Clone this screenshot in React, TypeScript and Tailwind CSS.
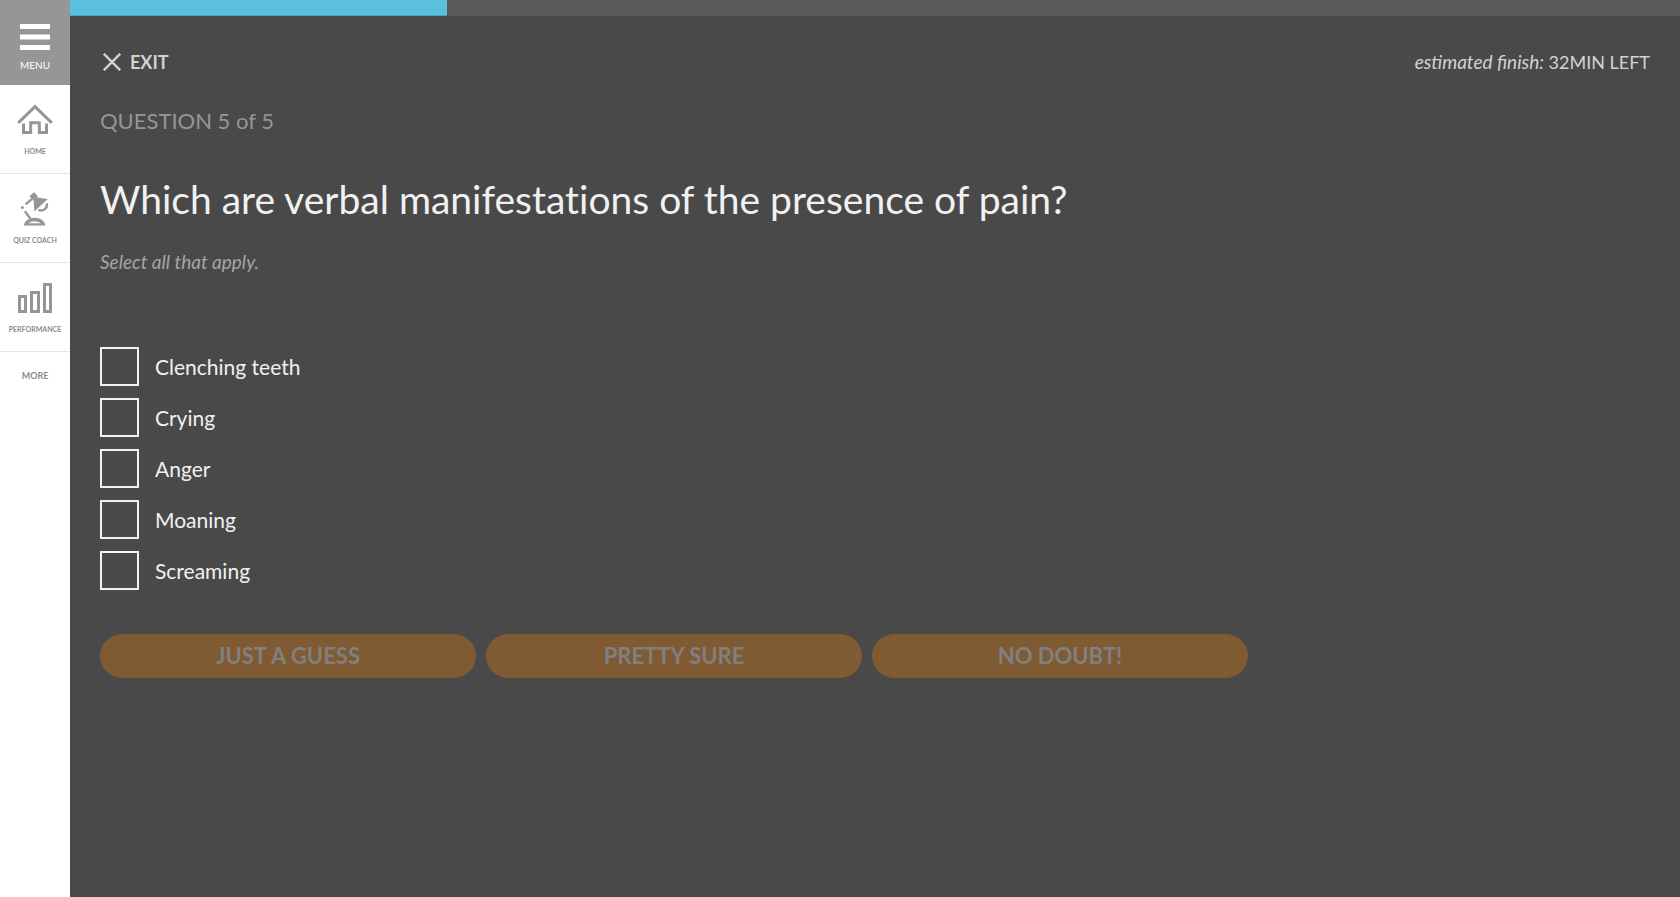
import { useState } from "react";
import type { ReactNode } from "react";

const OPTIONS = ["Clenching teeth", "Crying", "Anger", "Moaning", "Screaming"];
const CONFIDENCE = ["JUST A GUESS", "PRETTY SURE", "NO DOUBT!"];
const PROGRESS = 23.4;

function HomeIcon() {
  return (
    <svg width="36" height="32" viewBox="0 0 36 32" fill="none" stroke="#969696" strokeWidth="3" aria-hidden="true">
      <path d="M1.2 18.8 18 2.6l16.8 16.2" />
      <path d="M6.5 19.5v9h7.2v-9.8h8.6v9.8h7.2v-9" />
    </svg>
  );
}

function LampIcon() {
  return (
    <svg width="30" height="36" viewBox="0 0 30 36" fill="none" stroke="#969696" strokeWidth="2.4" aria-hidden="true">
      <path d="M9.5 5.2 14 1.2l3.4 3.2v2.200l10.400 1.400-13.400 12.600-.8-10.800z" fill="#969696" stroke="none" />
      <path d="M12 7.800 5.600 13.400" />
      <circle cx="2.400" cy="16.600" r="1.500" fill="#969696" stroke="none" />
      <path d="M4.800 20.200 10.400 27.600" />
      <path d="M26.800 12.400c1.200 4.600-3.400 8.600-8.600 6.600" />
      <path d="M3.800 34.500C4.600 29.700 9 26.800 14.600 26.800S24.600 29.700 25.400 34.500z" fill="#969696" stroke="none" />
      <path d="M8.400 32.200c2.400-2.400 10-2.400 12.400 0z" fill="#fff" stroke="none" />
    </svg>
  );
}

function BarsIcon() {
  return (
    <svg width="36" height="32" viewBox="0 0 36 32" fill="none" stroke="#969696" strokeWidth="3" aria-hidden="true">
      <path d="M2.5 14.5h6v15h-6zM14.5 10.5h7v19h-7zM27.5 2.5h6v27h-6z" />
    </svg>
  );
}

function NavItem({ label, children }: { label: string; children: ReactNode }) {
  return (
    <a href="#" className="flex flex-col items-center border-b border-[#e6e6e6] py-[17px]">
      <span className="flex h-9 items-center">{children}</span>
      <span className="mt-2 text-[7px] leading-[10px] font-bold">{label}</span>
    </a>
  );
}

export default function App() {
  const [selected, setSelected] = useState<string[]>([]);
  const toggle = (option: string) =>
    setSelected((prev) => (prev.includes(option) ? prev.filter((o) => o !== option) : [...prev, option]));

  return (
    <div className="flex min-h-screen bg-[#494949] font-[Lato,sans-serif] text-[#f1f1f1]">
      <nav className="flex w-[70px] shrink-0 flex-col bg-white text-[#8c8c8c]">
        <button type="button" className="flex flex-col items-center bg-[#969696] pt-6 pb-3 text-white">
          <svg width="30" height="26" viewBox="0 0 30 26" fill="currentColor" aria-hidden="true">
            <path d="M0 0h30v5H0zM0 10.5h30v5H0zM0 21h30v5H0z" />
          </svg>
          <span className="mt-2 text-[10px] leading-[15px]">MENU</span>
        </button>
        <NavItem label="HOME">
          <HomeIcon />
        </NavItem>
        <NavItem label="QUIZ COACH">
          <LampIcon />
        </NavItem>
        <NavItem label="PERFORMANCE">
          <BarsIcon />
        </NavItem>
        <a href="#" className="py-[17px] text-center text-[9px] leading-[14px] font-bold">
          MORE
        </a>
      </nav>

      <main className="min-w-0 flex-1">
        <div
          role="progressbar"
          aria-label="Quiz progress"
          aria-valuenow={PROGRESS}
          aria-valuemin={0}
          aria-valuemax={100}
          className="h-4 bg-[#58595b]"
        >
          <div className="h-full border-b border-[#45a5c4] bg-[#5bc0de]" style={{ width: `${PROGRESS}%` }} />
        </div>

        <div className="px-[30px] pt-[34px]">
          <header className="flex items-center justify-between text-[#d2d2d2]">
            <button type="button" className="flex items-center gap-[9px] pl-[3px] text-lg leading-6 font-bold">
              <svg width="18" height="18" viewBox="0 0 18 18" stroke="currentColor" strokeWidth="2.5" aria-hidden="true">
                <path d="M.8.8l16.4 16.4M17.2.8.8 17.2" />
              </svg>
              EXIT
            </button>
            <p className="text-lg leading-6">
              <em className="text-[19px]">estimated finish:</em> 32MIN LEFT
            </p>
          </header>

          <p className="mt-[31px] text-[22px] leading-8 text-[#969696]">QUESTION 5 of 5</p>
          <h1 className="mt-9 text-[39px] leading-[52px] [font-variant-ligatures:none]">
            Which are verbal manifestations of the presence of pain?
          </h1>
          <p className="mt-[25px] text-[19px] leading-6 text-[#a5a5a5] italic">Select all that apply.</p>

          <ul className="mt-[73px] flex flex-col gap-3">
            {OPTIONS.map((option) => (
              <li key={option} className="flex">
                <label className="flex items-center gap-4 text-[21px] leading-6">
                  <input
                    type="checkbox"
                    checked={selected.includes(option)}
                    onChange={() => toggle(option)}
                    className="size-[39px] appearance-none border-2 border-[#f1f1f1] checked:bg-[#5bc0de]"
                  />
                  {option}
                </label>
              </li>
            ))}
          </ul>

          <div className="mt-11 grid max-w-[1148px] grid-cols-3 gap-[10px]">
            {CONFIDENCE.map((label) => (
              <button
                key={label}
                type="button"
                disabled={selected.length === 0}
                className="h-11 rounded-full bg-[#f68b1f] text-[22px] leading-8 font-bold text-white disabled:bg-[#805a32] disabled:text-[#808080]"
              >
                {label}
              </button>
            ))}
          </div>
        </div>
      </main>
    </div>
  );
}
